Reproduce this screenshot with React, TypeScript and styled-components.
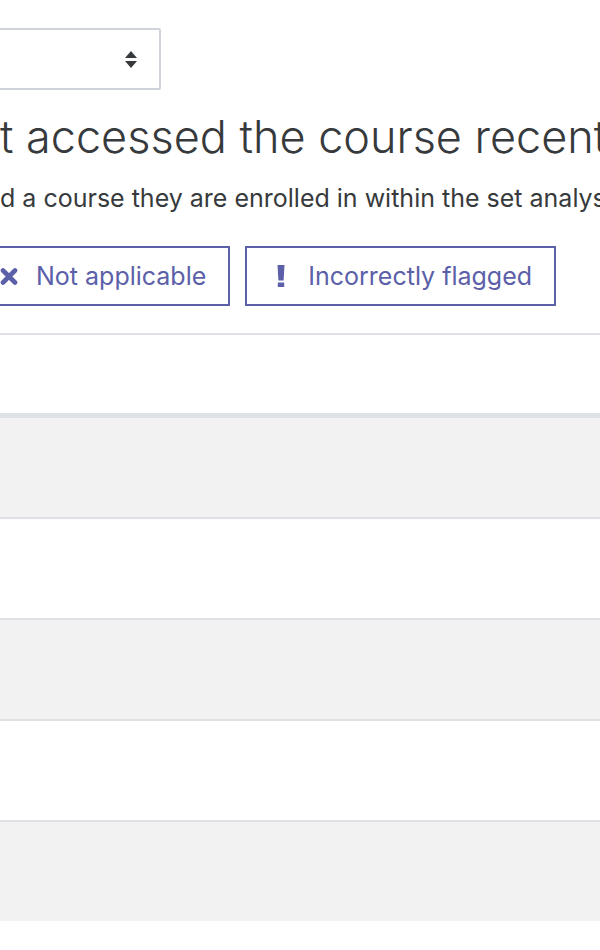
import React from "react";
import styled, { createGlobalStyle } from "styled-components";

const GlobalStyle = createGlobalStyle`
  html, body {
    margin: 0;
    padding: 0;
    background: #ffffff;
    overflow: hidden;
  }
  body {
    font-family: Inter, Roboto, "Liberation Sans", Arial, sans-serif;
    color: #373a3c;
  }
`;

const Page = styled.div`
  width: 600px;
  height: 950px;
  overflow: hidden;
  padding-top: 28px;
  box-sizing: border-box;
`;

const SelectBox = styled.div`
  box-sizing: border-box;
  width: 200px;
  height: 62px;
  margin-left: -39px;
  border: 2px solid #ced4da;
  border-radius: 2px;
  display: flex;
  align-items: center;
  justify-content: flex-end;
  padding-right: 22px;
  background: #fff;
`;

const Heading = styled.h3`
  margin: 20px 0 0 0;
  font-weight: 300;
  font-size: 45px;
  line-height: 54px;
  white-space: nowrap;
  color: #373a3c;
`;

const Description = styled.p`
  margin: 16px 0 0 0;
  font-size: 25px;
  line-height: 36px;
  white-space: nowrap;
  color: #373a3c;
`;

const ActionBar = styled.div`
  display: flex;
  gap: 15px;
  margin: 30px 0 0 -23px;
`;

const OutlineButton = styled.button`
  box-sizing: border-box;
  height: 60px;
  display: flex;
  align-items: center;
  padding: 0 22px 0 21px;
  border: 2px solid #5b60a9;
  border-radius: 0;
  background: #fff;
  color: #5b60a9;
  font-family: Inter, Roboto, "Liberation Sans", Arial, sans-serif;
  font-size: 25px;
  white-space: nowrap;
  cursor: pointer;
`;

const IconSlot = styled.span<{ $shift?: number }>`
  width: 26px;
  margin-right: 14px;
  margin-left: ${({ $shift = 0 }) => $shift}px;
  display: flex;
  justify-content: center;
  align-items: center;
`;

const Table = styled.table`
  width: 100%;
  margin-top: 27px;
  border-collapse: collapse;
`;

const HeadCell = styled.th`
  height: 78px;
  padding: 0;
  border-top: 2px solid #dee2e6;
  border-bottom: 5px solid #dee2e6;
`;

const Row = styled.tr<{ $striped: boolean }>`
  background: ${({ $striped }) => ($striped ? "#f2f2f2" : "#ffffff")};
`;

const Cell = styled.td<{ $first?: boolean }>`
  height: 99px;
  padding: 0;
  border-top: ${({ $first }) => ($first ? "none" : "2px solid #dee2e6")};
`;

const SortArrows = () => (
  <svg width="12" height="17" viewBox="0 0 12 17">
    <path d="M6 0 L12 7 L0 7 Z" fill="#373a3c" />
    <path d="M0 10 L12 10 L6 17 Z" fill="#373a3c" />
  </svg>
);

const TimesIcon = () => (
  <svg width="18" height="17" viewBox="0 0 18 17">
    <path
      d="M3 2.5 L15 14.5 M15 2.5 L3 14.5"
      stroke="#5b60a9"
      strokeWidth="4.6"
      strokeLinecap="round"
    />
  </svg>
);

const ExclamationIcon = () => (
  <svg width="8" height="22" viewBox="0 0 8 22">
    <path d="M0.5 0 H7.5 L6.6 15.5 H1.4 Z" fill="#5b60a9" />
    <rect x="0.8" y="17.5" width="6.4" height="4.5" fill="#5b60a9" />
  </svg>
);

const rows = [true, false, true, false, true];

export default function App() {
  return (
    <Page>
      <GlobalStyle />
      <SelectBox>
        <SortArrows />
      </SelectBox>
      <Heading>t accessed the course recently</Heading>
      <Description>
        d a course they are enrolled in within the set analysis interval.
      </Description>
      <ActionBar>
        <OutlineButton>
          <IconSlot $shift={-4}>
            <TimesIcon />
          </IconSlot>
          Not applicable
        </OutlineButton>
        <OutlineButton>
          <IconSlot>
            <ExclamationIcon />
          </IconSlot>
          Incorrectly flagged
        </OutlineButton>
      </ActionBar>
      <Table>
        <thead>
          <tr>
            <HeadCell />
          </tr>
        </thead>
        <tbody>
          {rows.map((striped, i) => (
            <Row key={i} $striped={striped}>
              <Cell $first={i === 0} />
            </Row>
          ))}
        </tbody>
      </Table>
    </Page>
  );
}
